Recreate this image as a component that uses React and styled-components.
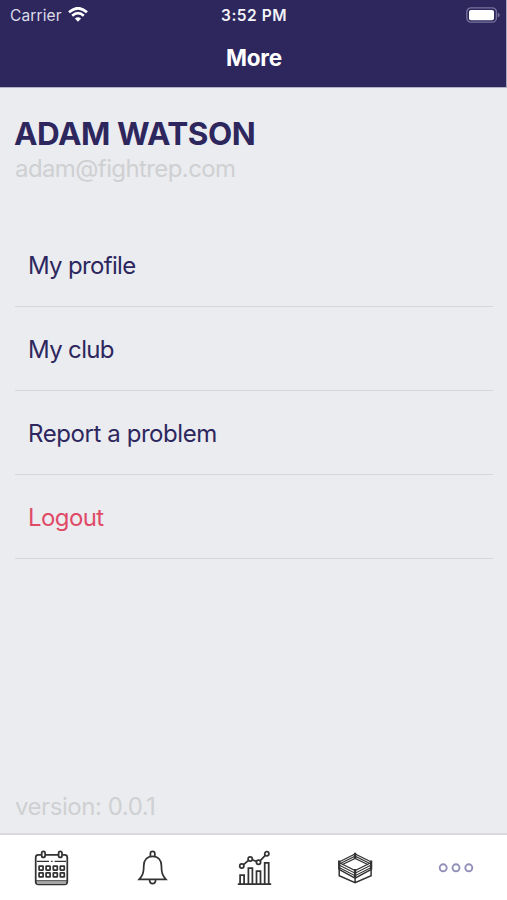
import styled, { createGlobalStyle } from "styled-components";

const menuItems = [
  { id: "profile", text: "My profile", tracking: -0.68 },
  { id: "club", text: "My club", tracking: -0.65 },
  { id: "report", text: "Report a problem", tracking: -0.42 },
  { id: "logout", text: "Logout", danger: true, tracking: -0.6 },
];

const App = () => {
  return (
    <Screen>
      <GlobalStyle />
      <Header>
        <StatusBar>
          <Carrier>
            <span>Carrier</span>
            <WifiIcon />
          </Carrier>
          <Time>3:52 PM</Time>
          <BatteryWrap>
            <BatteryIcon />
          </BatteryWrap>
        </StatusBar>
        <Title>More</Title>
      </Header>
      <Content>
        <Name>ADAM WATSON</Name>
        <Email>adam@fightrep.com</Email>
        <Menu>
          {menuItems.map(({ id, text, danger, tracking }) => (
            <MenuItem key={id} $danger={danger} $tracking={tracking}>
              {text}
            </MenuItem>
          ))}
        </Menu>
        <Version>version: 0.0.1</Version>
      </Content>
      <TabBar>
        <Tab>
          <CalendarIcon />
        </Tab>
        <Tab>
          <BellIcon />
        </Tab>
        <Tab>
          <ChartIcon />
        </Tab>
        <Tab>
          <RingIcon />
        </Tab>
        <Tab $active>
          <MoreIcon />
        </Tab>
      </TabBar>
    </Screen>
  );
};

export default App;

const WifiIcon = () => (
  <svg width="20" height="15" viewBox="0 0 20 15" fill="none" stroke="#fff">
    <path d="M1 5.2Q10-2.7 19 5.2" strokeWidth="2.7" />
    <path d="M4.2 8.7Q10 3.4 15.8 8.7" strokeWidth="2.6" />
    <path d="M6.9 11.6Q10 8.9 13.1 11.6L10 14.8Z" fill="#fff" stroke="none" />
  </svg>
);

const BatteryIcon = () => (
  <svg width="34" height="16" viewBox="0 0 34 16">
    <rect
      x="0.8"
      y="0.8"
      width="29.6"
      height="14.4"
      rx="4.2"
      fill="none"
      stroke="#77739a"
      strokeWidth="1.3"
    />
    <rect x="3" y="3" width="25" height="10.2" rx="2" fill="#fff" />
    <path d="M31.8 5.7Q33.7 6.2 33.7 8T31.8 10.3Z" fill="#77739a" />
  </svg>
);

const CalendarIcon = () => (
  <Icon viewBox="0 0 36 36">
    <path d="M8.2 4.8H5.3Q2.7 4.8 2.7 7.4V31.7Q2.7 34.3 5.3 34.3H31.7Q34.3 34.3 34.3 31.7V7.4Q34.3 4.8 31.7 4.8H29.5M12.4 4.8H25.2" />
    <rect x="8.7" y="1.4" width="3.4" height="6" rx="1.7" />
    <rect x="25.6" y="1.4" width="3.4" height="6" rx="1.7" />
    <path d="M4 11.4H16M18 11.4H19.6M21.6 11.4H33M3 30.9H34" strokeWidth="1.3" />
    <path d="M4 32.8H33" stroke="#aaa" strokeWidth="2" />
    {[18, 24.8].map((y) =>
      [8.1, 15.1, 22.3, 29.3].map((x) => (
        <rect key={`${x}-${y}`} x={x - 2} y={y - 2} width="4" height="4" rx="0.4" />
      ))
    )}
  </Icon>
);

const BellIcon = () => (
  <Icon viewBox="0 0 36 36">
    <path d="M16.4 6.5V3.5A2.2 2.2 0 0 1 20.8 3.5V6.5" />
    <path d="M18.6 6.3C12.8 6.3 9.8 10.5 9.8 15.5C9.8 22.5 8.9 25.3 5.2 29.3H31.9C28.3 25.3 27.4 22.5 27.4 15.5C27.4 10.5 24.4 6.3 18.6 6.3Z" />
    <path d="M15.6 29.5C15.6 35.1 21.6 35.1 21.6 29.5" />
  </Icon>
);

const ChartIcon = () => (
  <Icon viewBox="0 0 36 36">
    <path d="M1.8 34.2H35.2M4.1 34V25.2H8.1V34M12.4 34V18.2H16.4V34M20.5 34V21.2H24.5V34M28.7 34V12.8H32.7V34" />
    <path d="M7.5 14.7L12.5 10.4M16.2 9.8L20.5 11.5M24 10.8L29.3 5.3" />
    <circle cx="5.8" cy="16" r="2.1" />
    <circle cx="14.2" cy="9" r="2.1" />
    <circle cx="22.5" cy="12.3" r="2.1" />
    <circle cx="30.8" cy="3.8" r="2.1" />
  </Icon>
);

const RingIcon = () => (
  <Icon viewBox="0 0 36 36" strokeWidth="1.15">
    <path d="M2 11.9L18.1 4L34.3 11.9M2.8 13.7L18.1 6.2L33.4 13.7M5 14.8L18.1 8.5L31.2 14.8" />
    <path d="M2 12.6L18.1 20.6L34.3 12.6M2 15L18.1 23.2L34.3 15M2 17.4L18.1 25.7L34.3 17.4" />
    <path d="M2 19.4L18.1 28.2L34.3 19.4M2.2 19V25.8L18.1 32.6L34.1 25.8V19M18.1 27.5V32.6" strokeWidth="1.5" />
    <path d="M2.2 10.6V19.6M34.1 10.6V19.6M18.1 19V28.2M18.1 2.8V9" strokeWidth="2.3" />
  </Icon>
);

const MoreIcon = () => (
  <Icon viewBox="0 0 36 36" strokeWidth="1.9">
    <circle cx="5.2" cy="17.8" r="3.5" />
    <circle cx="18" cy="17.8" r="3.5" />
    <circle cx="30.8" cy="17.8" r="3.5" />
  </Icon>
);

const GlobalStyle = createGlobalStyle`
  body {
    margin: 0;
    background: #ebecf0;
    font-family: Inter, "Liberation Sans", sans-serif;
  }
`;

const Screen = styled.div`
  display: flex;
  flex-direction: column;
  width: 507px;
  height: 900px;
  overflow: hidden;
`;

const Header = styled.header`
  height: 88px;
  box-sizing: border-box;
  border-right: 1px solid #a9a7be;
  border-bottom: 1px solid #b4b3c7;
  background: #2d275e;
  color: #fff;
`;

const StatusBar = styled.div`
  display: grid;
  grid-template-columns: 1fr auto 1fr;
  align-items: center;
  height: 29px;
  padding: 0 6px 0 10px;
`;

const Carrier = styled.div`
  display: flex;
  align-items: center;
  gap: 6px;
  font-size: 15.5px;
  letter-spacing: 0.12px;
  line-height: 20px;
  color: #dddce8;

  span {
    padding-top: 2px;
  }
`;

const Time = styled.div`
  padding-top: 1px;
  margin-right: 2px;
  font-size: 15.5px;
  font-weight: 600;
  letter-spacing: 0.5px;
  color: #f4f3f8;
`;

const BatteryWrap = styled.div`
  display: flex;
  justify-content: flex-end;
`;

const Title = styled.h1`
  margin: 0;
  padding-left: 2px;
  font-size: 22.5px;
  font-weight: 700;
  letter-spacing: -0.2px;
  line-height: 58px;
  text-align: center;
`;

const Content = styled.main`
  display: flex;
  flex-direction: column;
  flex: 1;
  padding: 27px 14px 11px 15px;
`;

const Name = styled.h2`
  margin: 0 0 1px -1px;
  font-size: 31.5px;
  font-weight: 700;
  letter-spacing: -0.45px;
  line-height: 38px;
  color: #2d275e;
`;

const Email = styled.div`
  font-size: 24px;
  letter-spacing: -0.6px;
  line-height: 30px;
  color: #cfd0d2;
`;

const Menu = styled.ul`
  margin: 38.8px 0 0;
  padding: 0;
  list-style: none;
`;

const MenuItem = styled.li`
  box-sizing: border-box;
  height: 84.1px;
  padding-left: 13px;
  border-bottom: 1px solid #d5d6da;
  font-size: 24px;
  letter-spacing: ${(props) => props.$tracking}px;
  line-height: 86px;
  color: ${(props) => (props.$danger ? "#df4b67" : "#2d275e")};
`;

const Version = styled.div`
  margin-top: auto;
  font-size: 24px;
  letter-spacing: -0.45px;
  line-height: 30px;
  color: #cfd0d2;
`;

const TabBar = styled.nav`
  display: flex;
  box-sizing: border-box;
  height: 67px;
  border-top: 2px solid #d9dadc;
  background: #fff;
`;

const Tab = styled.div`
  display: flex;
  flex: 1;
  align-items: center;
  justify-content: center;
  color: ${(props) => (props.$active ? "#918fb8" : "#333")};
`;

const Icon = styled.svg.attrs((props) => ({
  fill: "none",
  stroke: "currentColor",
  strokeWidth: props.strokeWidth || 1.75,
}))`
  width: 36px;
  height: 36px;
`;
